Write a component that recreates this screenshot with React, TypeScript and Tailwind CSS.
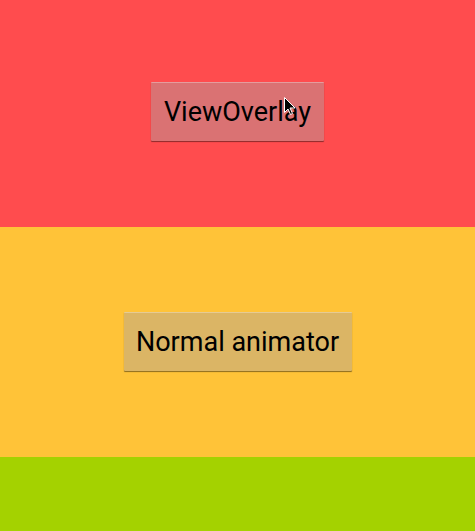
import React from "react";

function Cursor() {
  return (
    <svg
      className="absolute left-[284px] top-[97px]"
      width="12"
      height="19"
      viewBox="0 0 12 19"
    >
      <path
        d="M0.5 0.5 L0.5 15.5 L4 12 L6.5 17.5 L8.5 16.5 L6 11 L11 11 Z"
        fill="#000"
        stroke="#fff"
        strokeWidth="1"
      />
    </svg>
  );
}

function HoloButton({ label, tone, width }: { label: string; tone: string; width: string }) {
  return (
    <button
      className={`${tone} ${width} h-[59px] border-t border-white/30 shadow-[0_1px_1px_rgba(0,0,0,0.45)] rounded-[1px] flex items-center justify-center text-[27px] leading-none text-black`}
    >
      {label}
    </button>
  );
}

export default function App() {
  return (
    <div
      className="relative h-[531px] w-[475px] flex flex-col overflow-hidden"
      style={{ fontFamily: "Roboto, 'Noto Sans', sans-serif" }}
    >
      <div className="h-[227px] bg-[#ff4c4e] flex justify-center pt-[82px]">
        <HoloButton label="ViewOverlay" tone="bg-[#da7273]" width="w-[173px]" />
      </div>
      <div className="h-[230px] bg-[#ffc338] flex justify-center pt-[85px]">
        <HoloButton label="Normal animator" tone="bg-[#dbb565]" width="w-[228px]" />
      </div>
      <div className="flex-1 bg-[#a4d200]" />
      <Cursor />
    </div>
  );
}
